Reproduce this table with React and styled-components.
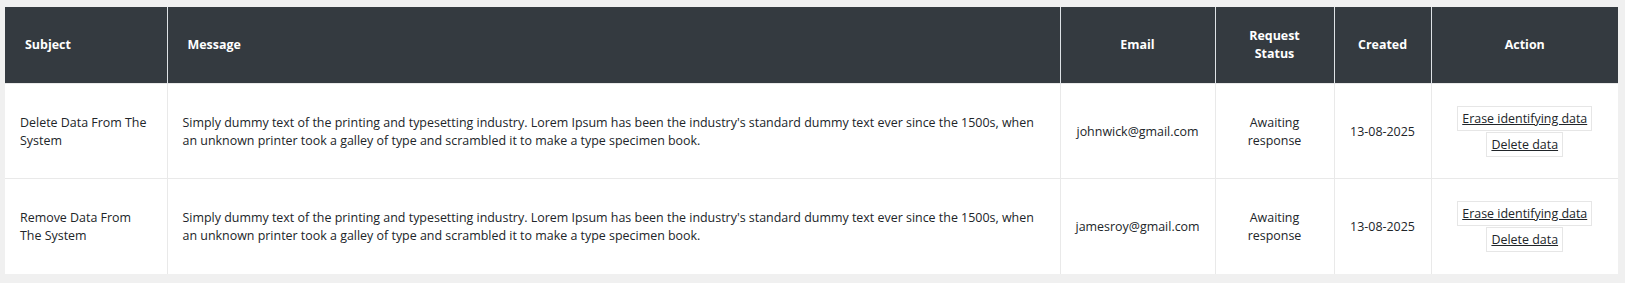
import React from "react";
import styled, { createGlobalStyle } from "styled-components";

const GlobalStyle = createGlobalStyle`
  html, body { margin: 0; padding: 0; background: #f0f0f0; }
  body { font-family: "Open Sans", "Noto Sans", sans-serif; }
`;

const Page = styled.div`
  padding: 7px 7px 9px 5px;
`;

const Table = styled.table`
  width: 1613px;
  border-collapse: collapse;
  table-layout: fixed;
  background: #ffffff;
  font-size: 12.45px;
  color: #212529;
`;

const Th = styled.th`
  background: #343a40;
  color: #ffffff;
  font-weight: 700;
  line-height: 18px;
  padding: 20px;
  text-align: ${(p) => (p.$align === "left" ? "left" : "center")};
  vertical-align: middle;
  border-left: 1px solid #dee2e6;
  &:first-child { border-left: none; }
`;

const Row = styled.tr`
  height: ${(p) => p.$h}px;
  border-top: 1px solid #e9e9e9;
`;

const Td = styled.td`
  padding: ${(p) => (p.$actions ? "20px 15px" : "21px 15px 19px")};
  line-height: 18.4px;
  text-align: ${(p) => (p.$align === "left" ? "left" : "center")};
  vertical-align: middle;
  border-left: 1px solid #e9e9e9;
  &:first-child { border-left: none; }
`;

const Actions = styled.div`
  display: flex;
  flex-direction: column;
  align-items: center;
  gap: 1px;
`;

const ActionButton = styled.button`
  font: inherit;
  line-height: 17px;
  color: #212529;
  background: #ffffff;
  border: 1px solid #e6e6e6;
  padding: 3px 4px;
  text-decoration: underline;
  cursor: pointer;
`;

const message =
  "Simply dummy text of the printing and typesetting industry. Lorem Ipsum has been the industry's standard dummy text ever since the 1500s, when an unknown printer took a galley of type and scrambled it to make a type specimen book.";

const rows = [
  { subject: "Delete Data From The System", email: "johnwick@gmail.com", h: 95 },
  { subject: "Remove Data From The System", email: "jamesroy@gmail.com", h: 95 },
];

export default function App() {
  return (
    <>
      <GlobalStyle />
      <Page>
        <Table>
          <colgroup>
            <col style={{ width: 162 }} />
            <col style={{ width: 893 }} />
            <col style={{ width: 155 }} />
            <col style={{ width: 119 }} />
            <col style={{ width: 97 }} />
            <col style={{ width: 187 }} />
          </colgroup>
          <thead>
            <tr>
              <Th $align="left">Subject</Th>
              <Th $align="left">Message</Th>
              <Th>Email</Th>
              <Th>Request Status</Th>
              <Th>Created</Th>
              <Th>Action</Th>
            </tr>
          </thead>
          <tbody>
            {rows.map((r) => (
              <Row key={r.email} $h={r.h}>
                <Td $align="left">{r.subject}</Td>
                <Td $align="left">{message}</Td>
                <Td>{r.email}</Td>
                <Td>Awaiting response</Td>
                <Td>13-08-2025</Td>
                <Td $actions>
                  <Actions>
                    <ActionButton type="button">Erase identifying data</ActionButton>
                    <ActionButton type="button">Delete data</ActionButton>
                  </Actions>
                </Td>
              </Row>
            ))}
          </tbody>
        </Table>
      </Page>
    </>
  );
}
